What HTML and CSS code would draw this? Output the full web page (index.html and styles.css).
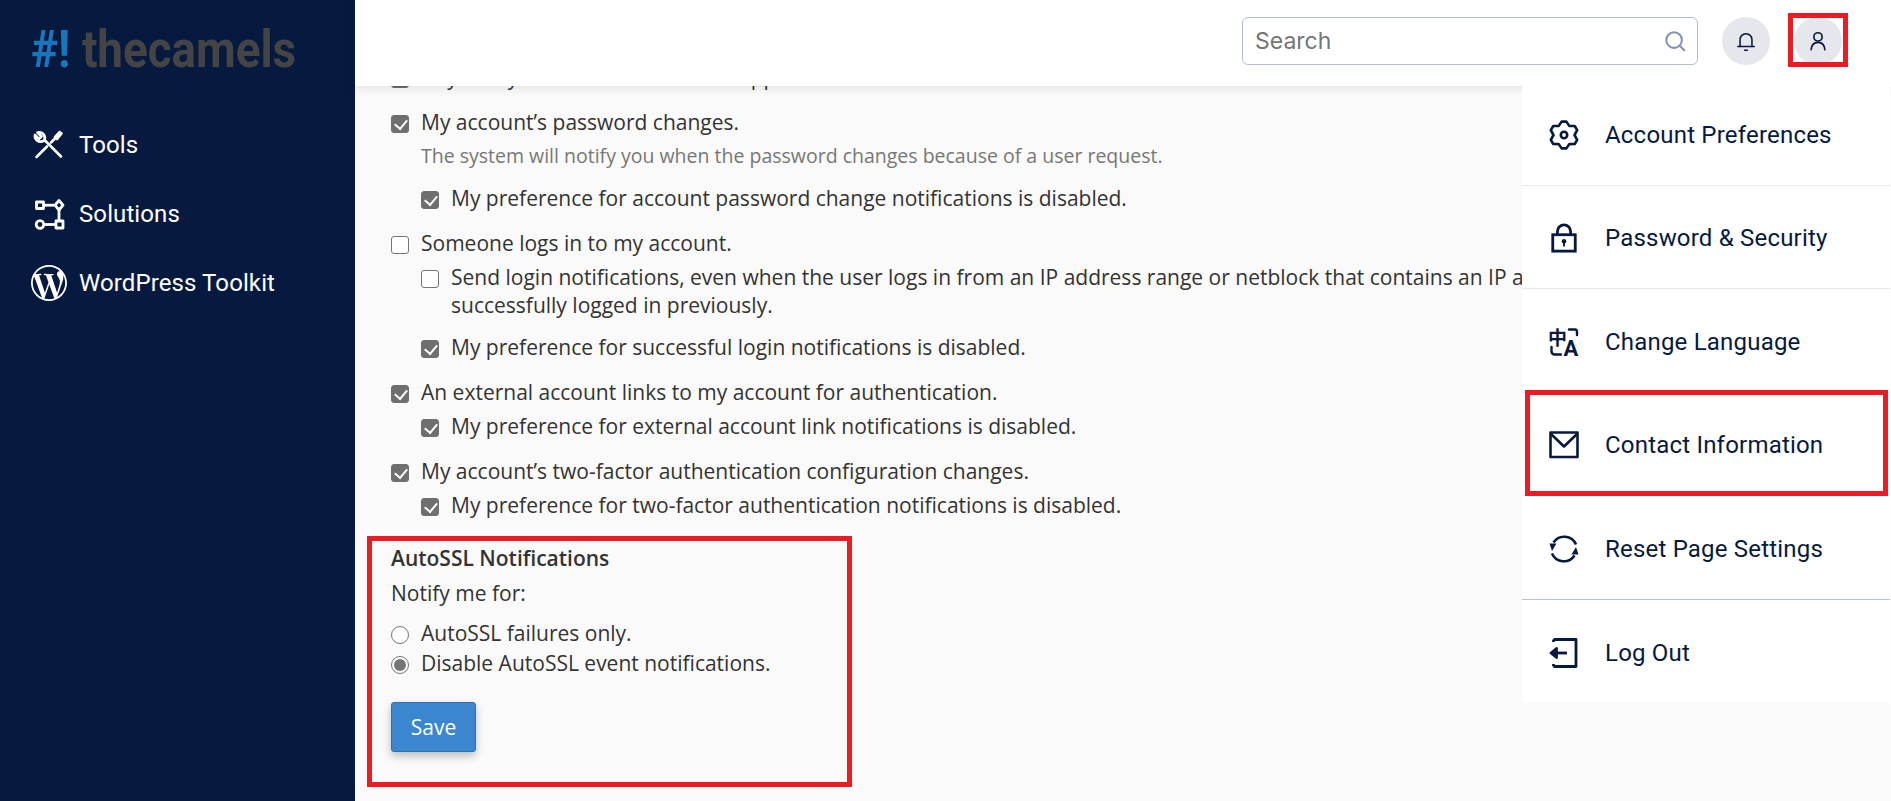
FILE: index.html
```html
<!DOCTYPE html>
<html lang="en">
<head>
    <meta charset="UTF-8">
    <title>Contact Information</title>
    <link rel="stylesheet" href="styles.css">
</head>
<body>
    <div class="page">
        <aside class="sidebar">
            <div class="logo"><span class="logo-mark">#!</span> <span class="logo-name">thecamels</span></div>
            <nav class="side-nav">
                <a class="side-item">
                    <svg class="side-icon" viewBox="0 0 36 36" fill="none" stroke="#fff" stroke-width="2.6" stroke-linecap="round" stroke-linejoin="round">
                        <path d="M30 29.5 L13.5 13"/>
                        <path d="M13.5 13 C15 9 11.5 4 6.5 5.5 L10.5 9.5 L8 12 L4 8 C3.2 13 8 16 12.5 14"/>
                        <path d="M5.5 30 L16 19.5"/>
                        <path d="M20 15.5 L25 10.5"/>
                        <path d="M24 10 L28.5 5 L30.5 6.5 L26 12 Z" fill="#fff"/>
                    </svg>
                    <span>Tools</span>
                </a>
                <a class="side-item">
                    <svg class="side-icon" viewBox="0 0 36 36" fill="none" stroke="#fff" stroke-width="2.8" stroke-linejoin="round">
                        <rect x="5.5" y="6" width="7" height="6.5"/>
                        <path d="M12.5 9.2 H23.5"/>
                        <path d="M28 4.5 L32 9.2 L28 14 L24 9.2 Z"/>
                        <path d="M28 14 V25"/>
                        <circle cx="9" cy="28.5" r="3.8"/>
                        <path d="M12.8 28.5 H25"/>
                        <rect x="25" y="25" width="7" height="7"/>
                    </svg>
                    <span>Solutions</span>
                </a>
                <a class="side-item">
                    <svg class="side-icon" viewBox="0 0 24 24" fill="#fff">
                        <path d="M21.469 6.825c.84 1.537 1.318 3.3 1.318 5.175 0 3.979-2.156 7.456-5.363 9.325l3.295-9.527c.615-1.54.82-2.771.82-3.864 0-.405-.026-.78-.07-1.11m-7.981.105c.647-.03 1.232-.105 1.232-.105.582-.075.514-.93-.067-.899 0 0-1.755.135-2.88.135-1.064 0-2.85-.15-2.85-.15-.585-.03-.661.855-.075.885 0 0 .54.061 1.125.09l1.68 4.605-2.37 7.08L5.354 6.9c.649-.03 1.234-.1 1.234-.1.585-.075.516-.93-.065-.896 0 0-1.746.138-2.874.138-.2 0-.438-.008-.69-.015C4.911 3.15 8.235 1.215 12 1.215c2.809 0 5.365 1.072 7.286 2.833-.046-.003-.091-.009-.141-.009-1.06 0-1.812.923-1.812 1.914 0 .89.513 1.643 1.06 2.531.411.72.89 1.643.89 2.977 0 .915-.354 1.994-.821 3.479l-1.075 3.585-3.9-11.61.001.014zM12 22.784c-1.059 0-2.081-.153-3.048-.437l3.237-9.406 3.315 9.087c.024.053.05.101.078.149-1.12.393-2.325.609-3.582.609M1.211 12c0-1.564.336-3.05.935-4.39L7.29 21.709C3.694 19.96 1.212 16.271 1.211 12M12 0C5.385 0 0 5.385 0 12s5.385 12 12 12 12-5.385 12-12S18.615 0 12 0"/>
                    </svg>
                    <span>WordPress Toolkit</span>
                </a>
            </nav>
        </aside>

        <div class="content">
            <header class="topbar">
                <div class="search">
                    <input class="search-input" type="text" placeholder="Search">
                    <svg class="search-icon" viewBox="0 0 24 24" fill="none" stroke="#8391b5" stroke-width="2.2" stroke-linecap="round">
                        <circle cx="11" cy="11" r="8.5"/>
                        <path d="M17 17 L22 22"/>
                    </svg>
                </div>
                <button class="round-btn">
                    <svg viewBox="0 0 24 24" fill="none" stroke="#061a40" stroke-width="1.7" stroke-linecap="round">
                        <path d="M3 18 H21"/>
                        <path d="M5.5 18 V10.5 A6.5 6.5 0 0 1 18.5 10.5 V18"/>
                        <path d="M10.5 22 H13.5"/>
                    </svg>
                </button>
                <button class="round-btn">
                    <svg viewBox="0 0 24 24" fill="none" stroke="#061a40" stroke-width="1.8" stroke-linecap="round">
                        <circle cx="12" cy="7.5" r="4.5"/>
                        <path d="M4.5 21.5 C5 15.5 8 13.5 12 13.5 C16 13.5 19 15.5 19.5 21.5"/>
                    </svg>
                </button>
                <div class="mark mark-user"></div>
            </header>

            <main class="main">
                <div class="opt first">
                    <span class="box checked"></span>
                    <span>Any of my account’s details are supplied.</span>
                </div>

                <div class="opt second">
                    <span class="box checked"></span>
                    <span>My account’s password changes.</span>
                </div>
                <p class="hint">The system will notify you when the password changes because of a user request.</p>
                <div class="opt nested spaced">
                    <span class="box checked"></span>
                    <span>My preference for account password change notifications is disabled.</span>
                </div>

                <div class="opt group">
                    <span class="box"></span>
                    <span>Someone logs in to my account.</span>
                </div>
                <div class="opt nested near">
                    <span class="box"></span>
                    <span>Send login notifications, even when the user logs in from an IP address range or netblock that contains an IP address from which a user successfully logged in previously.</span>
                </div>
                <div class="opt nested spaced">
                    <span class="box checked"></span>
                    <span>My preference for successful login notifications is disabled.</span>
                </div>

                <div class="opt group">
                    <span class="box checked"></span>
                    <span>An external account links to my account for authentication.</span>
                </div>
                <div class="opt nested near">
                    <span class="box checked"></span>
                    <span>My preference for external account link notifications is disabled.</span>
                </div>

                <div class="opt group">
                    <span class="box checked"></span>
                    <span>My account’s two-factor authentication configuration changes.</span>
                </div>
                <div class="opt nested near">
                    <span class="box checked"></span>
                    <span>My preference for two-factor authentication notifications is disabled.</span>
                </div>

                <section class="autossl">
                    <div class="mark mark-autossl"></div>
                    <h4 class="section-title">AutoSSL Notifications</h4>
                    <p class="notify">Notify me for:</p>
                    <div class="opt radio-first">
                        <span class="box radio"></span>
                        <span>AutoSSL failures only.</span>
                    </div>
                    <div class="opt radio-next">
                        <span class="box radio selected"></span>
                        <span>Disable AutoSSL event notifications.</span>
                    </div>
                    <button class="save">Save</button>
                </section>
            </main>

            <div class="menu">
                <a class="menu-item">
                    <svg class="menu-icon" viewBox="0 0 30 30" fill="none" stroke="#061a40" stroke-width="2.6" stroke-linejoin="round">
                        <path d="M12.6 1.6 H17.4 L20.25 5.9 L25.7 6 L28.2 10.2 L25.5 15 L28.2 19.8 L25.7 24 L20.25 24.1 L17.4 28.4 H12.6 L9.75 24.1 L4.3 24 L1.8 19.8 L4.5 15 L1.8 10.2 L4.3 6 L9.75 5.9 Z"/>
                        <circle cx="15" cy="15" r="3.2"/>
                    </svg>
                    <span>Account Preferences</span>
                </a>
                <a class="menu-item">
                    <svg class="menu-icon" viewBox="0 0 30 32" fill="none" stroke="#061a40" stroke-width="3">
                        <path d="M8 12 V9 A7 7 0 0 1 22 9 V12"/>
                        <rect x="3" y="12.5" width="24" height="17.5"/>
                        <circle cx="15" cy="19.5" r="2.4" fill="#061a40" stroke="none"/>
                        <path d="M15 20 V25" stroke-width="2"/>
                    </svg>
                    <span>Password &amp; Security</span>
                </a>
                <a class="menu-item">
                    <svg class="menu-icon" viewBox="0 0 30 30" fill="none" stroke="#061a40" stroke-width="2.4" stroke-linecap="round">
                        <text class="lang-cjk" x="-1" y="18">中</text>
                        <text class="lang-latin" x="14.5" y="29">A</text>
                        <path d="M20 2.5 H26 Q28 2.5 28 5 V8"/>
                        <path d="M2.5 20 V24 Q2.5 27.5 6 27.5 H12"/>
                    </svg>
                    <span>Change Language</span>
                </a>
                <a class="menu-item">
                    <svg class="menu-icon" viewBox="0 0 30 28" fill="none" stroke="#061a40" stroke-width="2.6" stroke-linejoin="round">
                        <rect x="1.5" y="1.5" width="27" height="24.5"/>
                        <path d="M2 3 L15 15.5 L28 3"/>
                    </svg>
                    <span>Contact Information</span>
                    <div class="mark mark-contact"></div>
                </a>
                <a class="menu-item">
                    <svg class="menu-icon" viewBox="0 0 30 30" fill="none" stroke="#061a40" stroke-width="2.6">
                        <path d="M4.5 8.5 A12.8 12.8 0 0 1 27 10.5"/>
                        <path d="M25.5 21.5 A12.8 12.8 0 0 1 3 19.5"/>
                        <path d="M0.5 9.5 L7.5 9.5 L3 17 Z" fill="#061a40" stroke="none"/>
                        <path d="M29.5 20.5 L22.5 20.5 L27 13 Z" fill="#061a40" stroke="none"/>
                    </svg>
                    <span>Reset Page Settings</span>
                </a>
                <a class="menu-item">
                    <svg class="menu-icon" viewBox="0 0 30 30" fill="none" stroke="#061a40" stroke-width="2.8" stroke-linejoin="round">
                        <path d="M4.5 1.5 H27 V28.5 H4.5"/>
                        <path d="M4.5 1.5 V4"/>
                        <path d="M4.5 28.5 V26"/>
                        <path d="M18 15 H3"/>
                        <path d="M7.5 10.5 L2 15 L7.5 19.5 Z" fill="#061a40"/>
                    </svg>
                    <span>Log Out</span>
                </a>
            </div>
        </div>
    </div>
</body>
</html>
```

FILE: styles.css
```css
* {
    box-sizing: border-box;
}
html, body {
    height: 100%;
}
body {
    margin: 0;
    font-family: "Open Sans", sans-serif;
    color: #333;
    background: #fafafa;
    overflow: hidden;
}
.page {
    display: flex;
    height: 100vh;
}

/* sidebar */
.sidebar {
    width: 355px;
    flex: none;
    background: #061a40;
    padding: 22px 31px 0;
}
.logo {
    font-family: "Roboto", sans-serif;
    font-weight: 700;
    font-size: 52px;
    line-height: 56px;
    white-space: nowrap;
    width: 300px;
    transform: scaleX(0.88);
    transform-origin: left center;
}
.logo-mark {
    color: #1b75bc;
}
.logo-name {
    color: #444;
}
.side-nav {
    margin-top: 49px;
    display: flex;
    flex-direction: column;
    gap: 33px;
}
.side-item {
    display: flex;
    align-items: center;
    gap: 12px;
    height: 36px;
    color: #fff;
    font-family: "Roboto", sans-serif;
    font-size: 24px;
    letter-spacing: 0.1px;
}
.side-icon {
    width: 36px;
    height: 36px;
    flex: none;
}

/* top bar */
.content {
    flex: 1;
    min-width: 0;
    position: relative;
    display: flex;
    flex-direction: column;
}
.topbar {
    height: 86px;
    flex: none;
    background: #fff;
    box-shadow: 0 2px 10px rgba(0, 0, 0, 0.1);
    position: relative;
    z-index: 1;
    display: flex;
    align-items: center;
    justify-content: flex-end;
    padding: 0 49px 4px 0;
}
.search {
    width: 456px;
    height: 48px;
    border: 1px solid #b4bdd3;
    border-radius: 6px;
    display: flex;
    align-items: center;
    padding: 0 11px 0 12px;
    margin-right: 24px;
}
.search-input {
    flex: 1;
    min-width: 0;
    border: none;
    outline: none;
    background: none;
    padding: 0;
    font-family: "Inter", sans-serif;
    font-size: 23px;
}
.search-input::placeholder {
    color: #757575;
}
.search-icon {
    width: 22px;
    height: 22px;
    flex: none;
}
.round-btn {
    width: 48px;
    height: 48px;
    border: none;
    border-radius: 50%;
    background: #e5e7ec;
    padding: 13px;
    margin-left: 0;
}
.round-btn + .round-btn {
    margin-left: 24px;
}

/* form */
.main {
    flex: 1;
    overflow: hidden;
    padding: 0 0 0 36px;
    font-size: 21px;
    line-height: 28px;
    color: #333;
}
.opt {
    display: flex;
    gap: 12px;
    max-width: 1400px;
}
.first {
    margin-top: -23px;
}
.second {
    margin-top: 17px;
}
.group {
    margin-top: 17px;
}
.hint {
    margin: 6px 0 0 30px;
    color: #777;
    font-size: 19.5px;
}
.nested {
    margin-left: 30px;
}
.near {
    margin-top: 6px;
}
.spaced {
    margin-top: 14px;
}
.box {
    width: 18px;
    height: 18px;
    flex: none;
    margin-top: 7px;
    border: 1.5px solid #767676;
    border-radius: 3px;
    background: #fff;
    position: relative;
}
.box.checked {
    background: #6f6f6f;
    border-color: #6f6f6f;
}
.box.checked::after {
    content: "";
    position: absolute;
    left: 4.5px;
    top: 1px;
    width: 6px;
    height: 10px;
    border: solid #fff;
    border-width: 0 2.5px 2.5px 0;
    transform: rotate(40deg);
}
.box.radio {
    border-radius: 50%;
}
.box.selected::after {
    content: "";
    position: absolute;
    left: 1.5px;
    top: 1.5px;
    width: 12px;
    height: 12px;
    border-radius: 50%;
    background: #767676;
}
.autossl {
    position: relative;
    margin-top: 25px;
}
.section-title {
    margin: 0;
    font-size: 21px;
    font-weight: 600;
}
.notify {
    margin: 7px 0 0;
}
.radio-first {
    margin-top: 12px;
}
.radio-next {
    margin-top: 2px;
}
.save {
    display: block;
    width: 85px;
    height: 50px;
    margin-top: 25px;
    padding: 0;
    border: 1px solid #2f70ad;
    border-radius: 3px;
    background: #3a87cf;
    color: #fff;
    font-family: "Open Sans", sans-serif;
    font-size: 21px;
    box-shadow: 0 4px 8px rgba(0, 0, 0, 0.25);
}

/* account dropdown */
.menu {
    position: absolute;
    top: 82px;
    right: 1px;
    width: 368px;
    background: #fff;
    z-index: 2;
}
.menu-item {
    display: flex;
    align-items: center;
    gap: 26px;
    height: 103.5px;
    padding: 3px 0 0 27px;
    border-bottom: 1px solid #e6e8ee;
    color: #061a40;
    font-family: "Roboto", sans-serif;
    font-size: 24px;
    letter-spacing: 0.2px;
    position: relative;
}
.menu-item:nth-child(5) {
    border-bottom-color: #b7c0d6;
}
.menu-item:last-child {
    border-bottom: none;
}
.menu-icon {
    width: 30px;
    height: 30px;
    flex: none;
}
.lang-cjk {
    font-family: "Noto Sans CJK SC", sans-serif;
    font-size: 19px;
    font-weight: 700;
    fill: #061a40;
    stroke: none;
}
.lang-latin {
    font-family: "Roboto", sans-serif;
    font-size: 22px;
    font-weight: 700;
    fill: #061a40;
    stroke: none;
}

/* red annotation frames drawn on the screenshot */
.mark {
    position: absolute;
    border: 5px solid #ed1c24;
    pointer-events: none;
}
.mark-user {
    right: 43px;
    top: 13px;
    width: 60px;
    height: 54px;
}
.mark-contact {
    left: 3px;
    top: -2.5px;
    width: 363px;
    height: 106px;
}
.mark-autossl {
    left: -24px;
    top: -8px;
    width: 485px;
    height: 251px;
}
```
